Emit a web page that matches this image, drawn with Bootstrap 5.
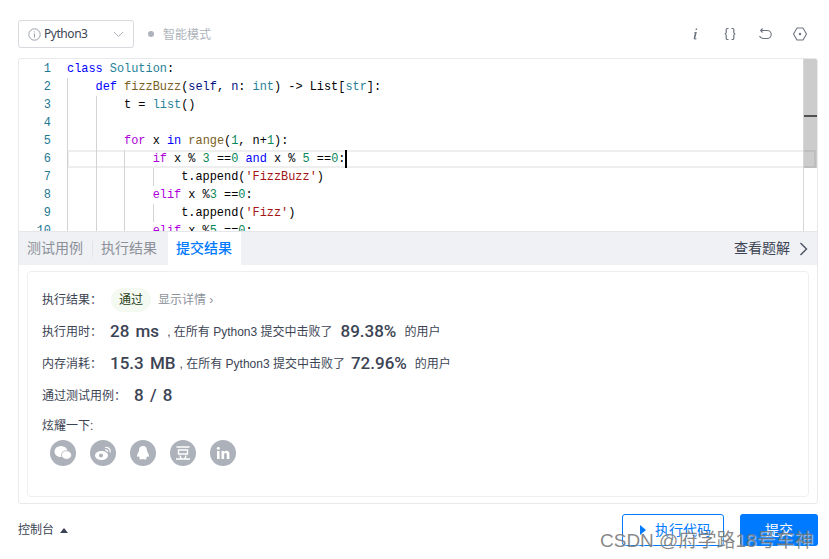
<!DOCTYPE html>
<html lang="zh"><head><meta charset="utf-8">
<link href="https://cdn.jsdelivr.net/npm/bootstrap@5.3.0/dist/css/bootstrap.min.css" rel="stylesheet">
<style>
html,body{height:559px;overflow:hidden;background:#fff}
body{font-family:"Liberation Sans","Noto Sans CJK SC",sans-serif;font-size:12px;color:#3c4454;position:relative}
.shell{padding:20px 11px 0 18px;height:559px}
.toolbar{height:28px;margin-bottom:10px}
.langsel{width:116px;height:28px;border:1px solid #d6d9de;border-radius:3px;padding:0 9px;color:#3c4454;background:#fff}
.langsel span{font-family:"Noto Sans",sans-serif;font-size:12px;margin-left:3px;letter-spacing:-.45px}
.smart{color:#aeb3bb;margin-left:14px;gap:9px;font-size:12px}
.smart span{padding-top:1px}
.dotmark{width:6px;height:6px;border-radius:50%;background:#aeb3bb}
.tools{gap:19px;padding-right:10px}
.editor{height:446px;border:1px solid #e8e9ec;border-radius:3px;overflow:hidden}
.codewrap{height:172px;padding-top:1px;overflow:hidden;position:relative;flex:none}
.gutter{width:48px;flex:none;text-align:right;padding-right:16px;color:#237893;font:11.9px/18px "Liberation Mono",monospace}
.codepane{font:11.9px/18px "Liberation Mono",monospace;color:#000;overflow:hidden;flex:1 1 auto;min-width:0}
.cl{height:18px;display:flex;white-space:pre}
.ig{display:block;width:28.56px;height:18px;border-left:1px solid #d3d3d3;flex:none}
.cur{box-shadow:inset 0 0 0 2px #eee;margin-right:1px}
.caret{display:block;width:2px;height:18px;background:#000;flex:none}
.vbar{position:absolute;top:0;right:0;bottom:0;width:14px;border-left:1px solid #d6d6d6}
.vthumb{height:109px;background:rgba(0,0,0,.2);overflow:hidden}
.vmark{height:2px;background:#505050;margin-top:56px}
.kb{color:#00f}.kp{color:#af00db}.ty{color:#267f99}.fn{color:#795e26}.va{color:#001080}.nu{color:#098658}.st{color:#a31515}
.tabbar{height:34px;flex:none;background:#f0f1f4;border-top:1px solid #e5e6e9;color:#8b9099;font-size:14px}
.tabitem{padding:0 9px 0 8px;height:100%;display:flex;align-items:center}
.tabitem.gapped{margin-right:2px}
.tabitem.on{background:#fff;color:#007aff;font-weight:500}
.tabsep{width:1px;height:16px;background:#e3e4e7}
.solution{color:#3c4454;font-size:14px;padding-right:9px;gap:9px}
.resbody{padding:6px 8px}
.rescard{height:226px;border:1px solid #eeeff1;border-radius:4px;padding:16px 14px 0}
.rrow{display:flex;align-items:center;height:24px;margin-bottom:8px;color:#3c4454;font-size:12px}
.rrow.lbl{height:20px;margin-bottom:4px}
.pass{display:inline-block;background:#f4f9f1;color:#26401a;border-radius:12px;padding:0 8px;height:24px;line-height:24px;margin:0 7px 0 9px}
.more{color:#8d929b}
.big{font-family:Roboto,sans-serif;font-weight:500;font-size:17px;word-spacing:2px;color:#3c4454}
.gap6{margin-left:6px}
.minor{color:#3c4454;font-size:12px}
.shareicons{gap:14px;padding-left:8px}
.sharedot{width:26px;height:26px;border-radius:50%;background:#adb1ba;display:flex;align-items:center;justify-content:center;color:#fff}
.footbar{padding-top:10px}
.consolelab{font-size:12px;color:#3c4454;gap:6px}
.btnrun{width:102px;height:32px;border:1px solid #007aff;color:#007aff;background:#fff;border-radius:3px;font-size:14px;padding:0 0 0 5px;gap:9px}
.btnsub{width:78px;height:32px;background:#007aff;color:#fff;border:0;border-radius:3px;font-size:14px;padding:0;margin-left:16px}
.mark-wm{position:absolute;left:600px;top:529px;color:rgba(115,115,115,.85);font-size:19px;line-height:24px;white-space:nowrap;text-shadow:1px 1px 1px rgba(255,255,255,.6)}
</style></head><body>
<div class="shell">
 <div class="toolbar d-flex align-items-center">
  <div class="langsel d-flex align-items-center">
   <svg width="13" height="13" viewBox="0 0 13 13" fill="none" stroke="#9aa0a8"><circle cx="6.500" cy="6.500" r="5.700"/><path d="M6.500 3.400v1M6.500 5.600v4"/></svg>
   <span>Python3</span>
   <svg class="ms-auto" width="11" height="7" viewBox="0 0 11 7" fill="none" stroke="#aeb3bb"><path d="M1 1l4.500 4.500L10 1"/></svg>
  </div>
  <div class="smart d-flex align-items-center"><i class="dotmark"></i><span>智能模式</span></div>
  <div class="tools d-flex align-items-center ms-auto">
   <svg width="16" height="16" viewBox="0 0 16 16"><path d="M8.800 2.500h1.400l-.3 1.400H8.500zM7.800 6h2l-1.500 6.200c0 .5.300.5 1.300 0v.7c-1.200.7-3 .9-2.900-.6l1.100-5.500H6.800z" fill="#6d7480"/></svg>
   <svg width="16" height="16" viewBox="0 0 16 16" fill="none" stroke="#6d7480" stroke-width="1.200"><path d="M6.500 2.500H5.200C4.400 2.500 4.200 3 4.200 3.800V6.500C4.200 7.300 3.700 7.800 2.800 8 3.700 8.200 4.200 8.700 4.200 9.500V12.200C4.200 13 4.400 13.500 5.200 13.500H6.500M9.500 2.500H10.800C11.600 2.500 11.800 3 11.800 3.800V6.500C11.800 7.300 12.300 7.800 13.200 8 12.300 8.200 11.800 8.700 11.800 9.500V12.200C11.800 13 11.600 13.500 10.800 13.500H9.500"/></svg>
   <svg width="16" height="16" viewBox="0 0 16 16" fill="none" stroke="#6d7480" stroke-width="1.100"><path d="M4 4.500h6.200a4 4 0 0 1 0 8H6a4 4 0 0 1-3.500-2.500"/><path d="M5.600 2.500L3.600 4.500l2 2"/></svg>
   <svg width="16" height="16" viewBox="0 0 16 16" fill="none" stroke="#6d7480" stroke-width="1.100"><path d="M5 2h6l3.500 6L11 14H5L1.500 8z" stroke-linejoin="round"/><circle cx="8" cy="8" r="1.200" fill="#6d7480" stroke="none"/></svg>
  </div>
 </div>
 <div class="editor d-flex flex-column">
  <div class="codewrap d-flex">
   <div class="gutter">1<br>2<br>3<br>4<br>5<br>6<br>7<br>8<br>9<br>10</div>
   <div class="codepane">
<div class="cl"><span><span class="kb">class</span> <span class="ty">Solution</span>:</span></div>
<div class="cl"><i class="ig"></i><span><span class="kb">def</span> <span class="fn">fizzBuzz</span>(<span class="va">self</span>, <span class="va">n</span>: <span class="ty">int</span>) -&gt; List[<span class="ty">str</span>]:</span></div>
<div class="cl"><i class="ig"></i><i class="ig"></i><span>t = <span class="ty">list</span>()</span></div>
<div class="cl"><i class="ig"></i><i class="ig"></i></div>
<div class="cl"><i class="ig"></i><i class="ig"></i><span><span class="kp">for</span> x <span class="kb">in</span> <span class="fn">range</span>(<span class="nu">1</span>, n+<span class="nu">1</span>):</span></div>
<div class="cl cur"><i class="ig"></i><i class="ig"></i><i class="ig"></i><span><span class="kp">if</span> x % <span class="nu">3</span> ==<span class="nu">0</span> <span class="kb">and</span> x % <span class="nu">5</span> ==<span class="nu">0</span>:</span><i class="caret"></i></div>
<div class="cl"><i class="ig"></i><i class="ig"></i><i class="ig"></i><i class="ig"></i><span>t.append(<span class="st">'FizzBuzz'</span>)</span></div>
<div class="cl"><i class="ig"></i><i class="ig"></i><i class="ig"></i><span><span class="kp">elif</span> x %<span class="nu">3</span> ==<span class="nu">0</span>:</span></div>
<div class="cl"><i class="ig"></i><i class="ig"></i><i class="ig"></i><i class="ig"></i><span>t.append(<span class="st">'Fizz'</span>)</span></div>
<div class="cl"><i class="ig"></i><i class="ig"></i><i class="ig"></i><span><span class="kp">elif</span> x %<span class="nu">5</span> ==<span class="nu">0</span>:</span></div>
   </div>
   <div class="vbar"><div class="vthumb"><div class="vmark"></div></div></div>
  </div>
  <div class="tabbar d-flex align-items-center">
   <div class="tabitem">测试用例</div><i class="tabsep"></i>
   <div class="tabitem gapped">执行结果</div>
   <div class="tabitem on">提交结果</div>
   <div class="solution d-flex align-items-center ms-auto">查看题解
    <svg width="9" height="14" viewBox="0 0 9 14" fill="none" stroke="#4a5160" stroke-width="1.400"><path d="M1.500 1l6 6-6 6"/></svg>
   </div>
  </div>
  <div class="resbody flex-grow-1">
   <div class="rescard">
    <div class="rrow"><span>执行结果：</span><span class="pass">通过</span><span class="more">显示详情 ›</span></div>
    <div class="rrow"><span>执行用时：</span><span class="big ms-2">28 ms</span><span class="minor ms-2">, 在所有 Python3 提交中击败了</span><span class="big ms-2">89.38%</span><span class="minor ms-2">的用户</span></div>
    <div class="rrow"><span>内存消耗：</span><span class="big ms-2">15.3 MB</span><span class="minor ms-1">, 在所有 Python3 提交中击败了</span><span class="big gap6">72.96%</span><span class="minor ms-2">的用户</span></div>
    <div class="rrow"><span>通过测试用例：</span><span class="big ms-2">8 / 8</span></div>
    <div class="rrow lbl">炫耀一下:</div>
    <div class="shareicons d-flex">
     <div class="sharedot"><svg width="18" height="16" viewBox="0 0 18 16" fill="#fff"><ellipse cx="7" cy="6.500" rx="6.500" ry="5.500"/><ellipse cx="12.500" cy="10" rx="5" ry="4.300" stroke="#adb1ba" stroke-width=".8"/></svg></div>
     <div class="sharedot"><svg width="18" height="16" viewBox="0 0 18 16" fill="none"><ellipse cx="7.500" cy="10.500" rx="6.500" ry="4.500" fill="#fff"/><circle cx="7" cy="10.500" r="2" fill="#adb1ba"/><path d="M11 2.500a4 4 0 0 1 5 5M11 5a1.800 1.800 0 0 1 2.500 2" stroke="#fff" stroke-width="1.200"/></svg></div>
     <div class="sharedot"><svg width="14" height="16" viewBox="0 0 14 16" fill="#fff"><path d="M7 1C4.300 1 3 3 3 5.500 3 7 1 9 1 11c0 1 .8 1.200 1.800.2.300.8.800 1.500 1.200 1.800-1 .4-1 1.500.8 1.500 1 0 1.700-.3 2.200-.5.500.2 1.200.5 2.200.5 1.800 0 1.800-1.100.8-1.500.4-.3.900-1 1.200-1.800 1 1 1.800.8 1.800-.2 0-2-2-4-2-5.500C11 3 9.700 1 7 1z"/></svg></div>
     <div class="sharedot"><svg width="16" height="16" viewBox="0 0 16 16" fill="none" stroke="#fff" stroke-width="1.400"><path d="M1.500 2h13M3.500 5h9v4h-9zM5 10.500l1 3M11 10.500l-1 3M1 14h14"/></svg></div>
     <div class="sharedot"><svg width="14" height="14" viewBox="0 0 14 14" fill="#fff"><rect x="1" y="5" width="2.600" height="8"/><circle cx="2.300" cy="2.300" r="1.500"/><path d="M5.500 5h2.500v1.200C8.500 5.300 9.500 4.800 10.600 4.800 12.500 4.800 13.400 6 13.400 8v5h-2.600V8.600c0-1-.3-1.600-1.200-1.600-1 0-1.500.7-1.500 1.700V13H5.500z"/></svg></div>
    </div>
   </div>
  </div>
 </div>
 <div class="footbar d-flex align-items-center">
  <div class="consolelab d-flex align-items-center">控制台<svg width="8" height="5" viewBox="0 0 8 5" fill="#3c4454"><path d="M4 0l4 5H0z"/></svg></div>
  <button class="btn btnrun d-flex align-items-center justify-content-center ms-auto"><svg width="6" height="10" viewBox="0 0 6 10" fill="#007aff"><path d="M0 0l6 5-6 5z"/></svg>执行代码</button>
  <button class="btn btnsub">提交</button>
 </div>
</div>
<div class="mark-wm">CSDN @府学路18号车神</div>
</body></html>
